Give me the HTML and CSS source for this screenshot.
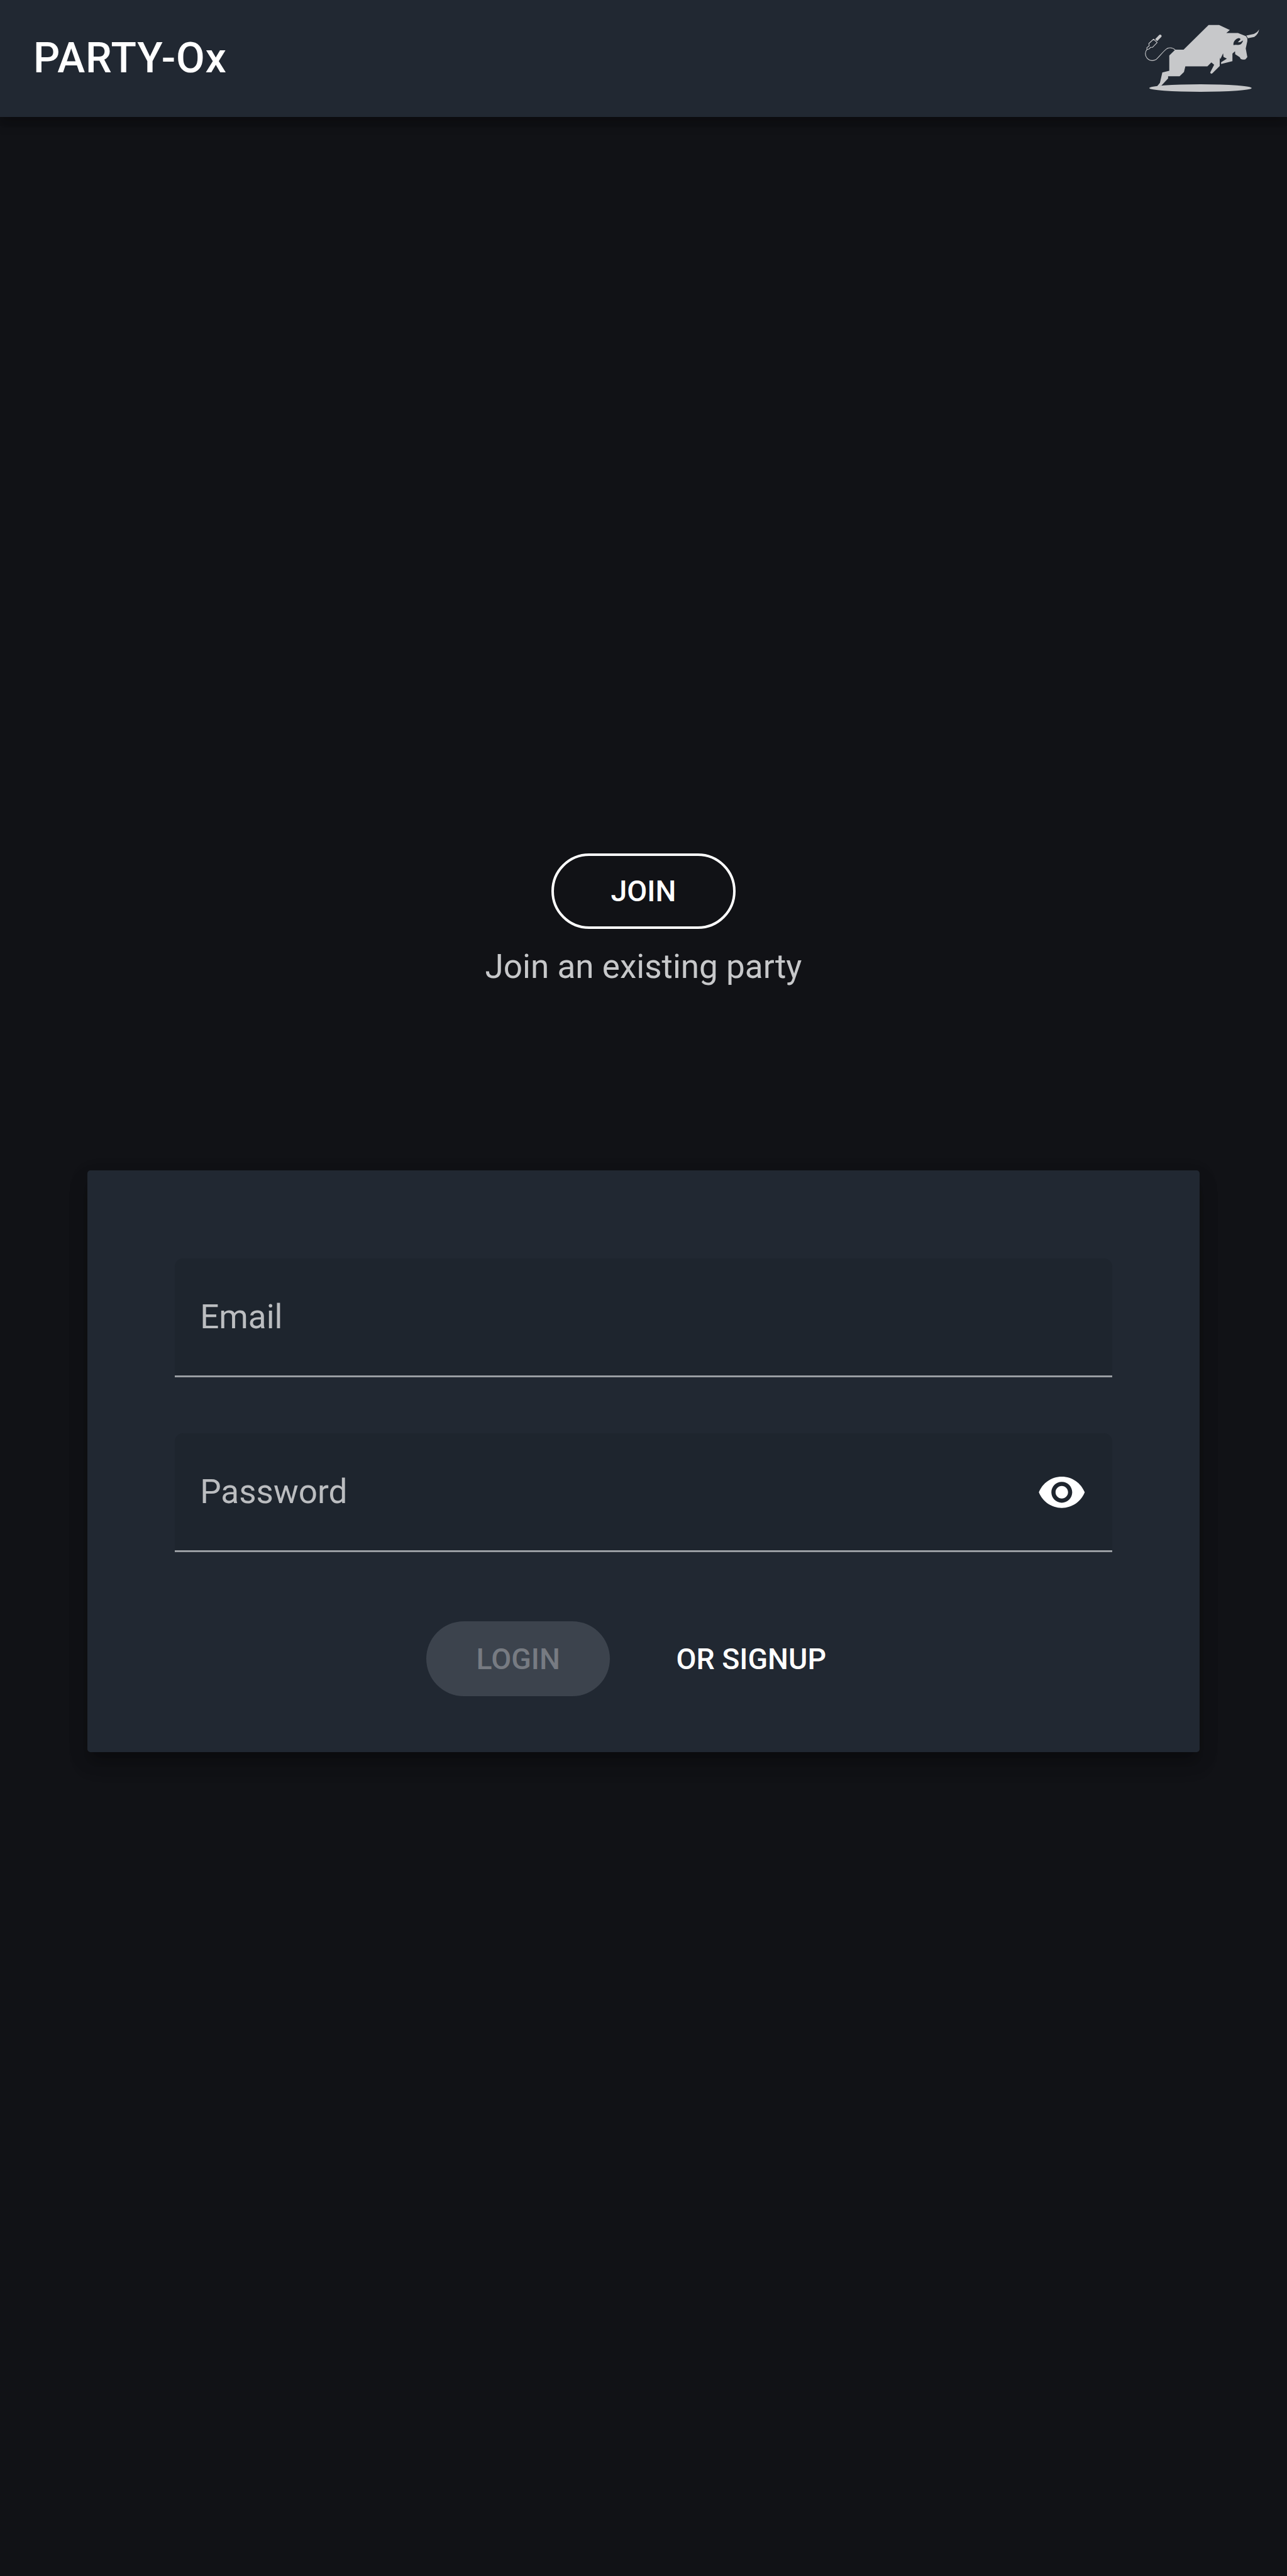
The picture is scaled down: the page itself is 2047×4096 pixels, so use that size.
FILE: index.html
```html
<!DOCTYPE html>
<html lang="en">
<head>
<meta charset="utf-8">
<title>PARTY-Ox</title>
<link rel="stylesheet" href="styles.css">
</head>
<body>
<header class="toolbar">
  <h1 class="title">PARTY-Ox</h1>
  <svg class="logo" viewBox="0 0 720 528" aria-label="Ox logo">
    <ellipse cx="343" cy="383" rx="258" ry="19"/>
    <path d="M384 66H437L491 91L473 106H532L572 122L579 134V147L571 184L579 227L570 238Q556 243 545 236L541 228L518 213L517 198L504 210V248L447 262V253L476 235L459 226L457 208L443 238L440 229V272L403 309Q396 315 392 305L412 266L398 254L378 274H267L260 302L238 324H180V335L145 372L124 375L139 357L151 305L186 296V219L216 190H258Z"/>
    <path d="M574 119L612 111Q630 103 638 88Q636 111 614 126L582 132Z"/>
    <path class="cut" d="M509 164C508 149 520 134 537 131Q544 132 545 138L531 153L543 152L558 143Q552 166 532 166Q517 164 509 167Z"/>
    <path class="cord" d="M216 191C204 180 189 178 175 184C161 192 135 226 119 240C106 246 88 247 75 234C62 219 63 200 75 187"/>
    <path class="plug" d="M107 137L125 154L102 178H92L83 187L74 189L73 180L85 170L83 159Z"/>
    <path d="M115 137L134 117Q140 111 146 117Q150 122 145 127L125 147Z"/>
  </svg>
</header>
<main class="content">
  <section class="join">
    <button class="btn btn-outline">JOIN</button>
    <p class="hint">Join an existing party</p>
  </section>
  <form class="card">
    <div class="field"><label>Email</label></div>
    <div class="field">
      <label>Password</label>
      <svg class="eye" viewBox="0 0 24 24"><path d="M12 4.5C7 4.5 2.73 7.61 1 12c1.73 4.39 6 7.5 11 7.5s9.27-3.11 11-7.5c-1.73-4.39-6-7.5-11-7.5zM12 17c-2.76 0-5-2.24-5-5s2.24-5 5-5 5 2.24 5 5-2.24 5-5 5zm0-8c-1.66 0-3 1.34-3 3s1.34 3 3 3 3-1.34 3-3-1.34-3-3-3z"/></svg>
    </div>
    <div class="actions">
      <button class="btn btn-filled" type="button" disabled>LOGIN</button>
      <button class="btn btn-text" type="button">OR SIGNUP</button>
    </div>
  </form>
</main>
</body>
</html>
```
FILE: styles.css
```css
/* 1rem = 100 layout units */
html { font-size: 94.769px; }
* { box-sizing: border-box; }
body {
  margin: 0;
  height: 4096px;
  overflow: hidden;
  background: #111216;
  color: #fff;
  font-family: Roboto, sans-serif;
}
.toolbar {
  display: flex;
  justify-content: space-between;
  align-items: flex-start;
  height: 1.96rem;
  padding: 0 .2rem 0 .56rem;
  background: #212832;
  box-shadow: 0 .07rem .14rem -.035rem rgba(0,0,0,.2), 0 .14rem .175rem rgba(0,0,0,.14), 0 .035rem .2rem rgba(0,0,0,.08);
}
.title { margin: 0; font-size: .7rem; font-weight: 500; line-height: 1.95rem; letter-spacing: .0125em; }
.logo { width: 2.4rem; height: 1.76rem; margin-top: .2rem; fill: #c7c8ca; }
.logo .cut { fill: #212832; }
.logo .cord { fill: none; stroke: #c7c8ca; stroke-width: 3.6; }
.logo .plug { fill: #212832; stroke: #c7c8ca; stroke-width: 3.6; stroke-linejoin: round; }
.content { display: flex; flex-direction: column; align-items: center; }
.join { display: flex; flex-direction: column; align-items: center; margin-top: 12.36rem; }
.btn {
  height: 1.26rem;
  padding: 0;
  border: 0;
  border-radius: .63rem;
  background: none;
  color: #fff;
  font: 500 .49rem/1.275rem Roboto, sans-serif;
  text-align: center;
}
.btn-outline { width: 3.09rem; height: 1.27rem; border: .0525rem solid #fff; line-height: 1.165rem; border-radius: .635rem; }
.hint { margin: .24rem 0 0; font-size: .56rem; line-height: .8rem; color: #c7c8ca; }
.card {
  width: 18.665rem;
  height: 9.757rem;
  margin-top: 3.01rem;
  padding: 1.472rem 1.47rem 0;
  border-radius: .05rem;
  background: #212832;
  box-shadow: 0 .175rem .175rem -.105rem rgba(0,0,0,.2), 0 .2rem .35rem rgba(0,0,0,.14), 0 .105rem .35rem rgba(0,0,0,.12);
}
.field {
  display: flex;
  align-items: center;
  justify-content: space-between;
  height: 1.995rem;
  margin-bottom: .945rem;
  padding: 0 .42rem;
  border-bottom: .035rem solid #9a9ea3;
  border-radius: .14rem .14rem 0 0;
  background: #1e252e;
  font-size: .56rem;
  color: #bbbdc0;
}
.eye { width: .84rem; height: .84rem; fill: #fff; }
.actions { display: flex; gap: .7rem; padding: .21rem 0 0 4.22rem; }
.btn-filled { width: 3.08rem; background: #3c434d; color: #777b82; }
.btn-text { width: 3.34rem; }
```
